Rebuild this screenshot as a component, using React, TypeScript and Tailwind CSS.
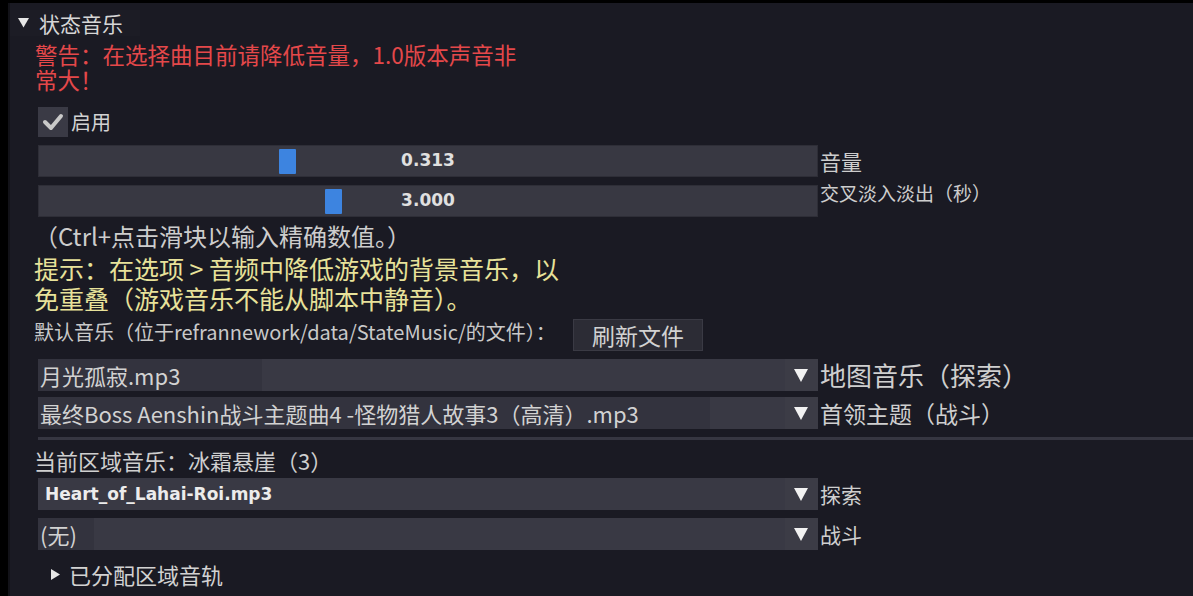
import React from "react";

const cjk = "font-['Noto_Sans_CJK_SC','Noto_Sans',sans-serif]";
const mono = "font-['DejaVu_Sans',sans-serif] font-bold";

function Triangle({ open }: { open: boolean }) {
  return open ? (
    <svg width="11" height="10" viewBox="0 0 11 10" className="shrink-0">
      <polygon points="0,0 11,0 5.5,9.5" fill="#e6e6e6" />
    </svg>
  ) : (
    <svg width="9" height="11" viewBox="0 0 9 11" className="shrink-0">
      <polygon points="0,0 9,5.5 0,11" fill="#e6e6e6" />
    </svg>
  );
}

function Slider({
  value,
  pos,
  label,
  labelCls,
}: {
  value: string;
  pos: number;
  label: string;
  labelCls: string;
}) {
  return (
    <div className="flex items-start gap-[2px] h-[32px]">
      <div className="relative h-[32px] w-[780px] bg-[#383842] border border-[#2e2e37] flex items-center justify-center">
        <div
          className="absolute top-[3px] h-[25px] w-[17px] bg-[#3d84e0] rounded-[1px]"
          style={{ left: pos }}
        />
        <span className={`${mono} text-[17px] text-[#e0e0e0] relative`}>{value}</span>
      </div>
      <span className={`${cjk} text-[#cdcdcd] ${labelCls}`}>{label}</span>
    </div>
  );
}

function Combo({
  text,
  label,
  hl,
  bold,
  labelSize = "text-[21px]",
}: {
  text: string;
  label: string;
  hl?: number;
  bold?: boolean;
  labelSize?: string;
}) {
  return (
    <div className="flex items-center gap-[2px] h-[32px]">
      <div className="h-[32px] w-[780px] bg-[#393944] flex items-center">
        <div
          className={`h-full flex items-center pl-[2px] shrink-0 ${hl ? "bg-[#33333e]" : ""}`}
          style={hl ? { width: hl } : undefined}
        >
          {bold ? (
            <span className={`${mono} text-[17px] leading-[32px] text-[#ececec] pl-[5px] whitespace-nowrap`}>
              {text}
            </span>
          ) : (
            <span className={`${cjk} text-[22px] leading-[32px] text-[#d2d2d2] whitespace-nowrap`}>{text}</span>
          )}
        </div>
        <div className="flex-1" />
        <div className="h-full w-[33px] bg-[#3c3c46] flex items-center pl-[9px]">
          <svg width="14" height="13" viewBox="0 0 14 13">
            <polygon points="0,0 14,0 7,13" fill="#f2f2f2" />
          </svg>
        </div>
      </div>
      <span className={`${cjk} ${labelSize} leading-[32px] text-[#cfcfcf] whitespace-nowrap`}>{label}</span>
    </div>
  );
}

export default function App() {
  return (
    <div className={`w-[1193px] h-[596px] bg-black overflow-hidden ${cjk}`}>
      <div className="h-[3px] bg-black" />
      <div className="flex h-[593px]">
        <div className="w-[8px] bg-black shrink-0" />
        <div className="w-[2px] bg-[#121218] shrink-0" />
        <div className="flex-1 bg-[#1a1a23] flex flex-col">
          {/* header */}
          <div className="flex items-center gap-[10px] pl-[8px] mt-[7px] h-[26px] w-[130px] bg-[#1c1c25]">
            <Triangle open />
            <span className="text-[21px] leading-[26px] text-[#d6d6d6]">状态音乐</span>
          </div>

          <div className="pl-[25px] flex flex-col">
            <p className="mt-[6px] w-[495px] text-[22.5px] leading-[25px] text-[#e4484a]">
              警告：在选择曲目前请降低音量，1.0版本声音非常大！
            </p>

            <div className="flex items-center gap-[3px] mt-[15px] pl-[3px] h-[30px]">
              <div className="w-[30px] h-[30px] bg-[#3a3a45] flex items-center justify-center">
                <svg width="22" height="18" viewBox="0 0 22 18">
                  <polyline
                    points="3,9 9,15 19,3"
                    fill="none"
                    stroke="#c9c9c9"
                    strokeWidth="4"
                    strokeLinecap="round"
                    strokeLinejoin="round"
                  />
                </svg>
              </div>
              <span className="text-[20px] leading-[30px] text-[#d2d2d2]">启用</span>
            </div>

            <div className="mt-[8px] pl-[3px] flex flex-col gap-[8px]">
              <Slider value="0.313" pos={240} label="音量" labelCls="text-[21px] leading-[32px]" />
              <Slider value="3.000" pos={286} label="交叉淡入淡出（秒）" labelCls="text-[19px] leading-[14px] pt-[1px]" />
            </div>

            <p className="mt-[2px] text-[24px] leading-[34px] text-[#cdcdcd] -ml-[1px]">
              （Ctrl+点击滑块以输入精确数值。）
            </p>

            <p className="mt-0 w-[545px] text-[25px] leading-[30px] text-[#e8e29a] -ml-[1px]">
              提示：在选项 &gt; 音频中降低游戏的背景音乐，以免重叠（游戏音乐不能从脚本中静音）。
            </p>

            <div className="flex items-start mt-[6px] h-[32px] -ml-[1px]">
              <span className="text-[20px] leading-[26px] text-[#c9c9c9] w-[539px] whitespace-nowrap">
                默认音乐（位于refrannework/data/StateMusic/的文件）：
              </span>
              <button className="h-[32px] w-[130px] bg-[#2c2c35] border border-[#3a3a44] text-[23px] leading-[30px] text-[#d2d2d2]">
                刷新文件
              </button>
            </div>

            <div className="mt-[8px] pl-[3px] flex flex-col gap-[6px]">
              <Combo text="月光孤寂.mp3" label="地图音乐（探索）" hl={224} labelSize="text-[26px]" />
              <Combo
                text="最终Boss Aenshin战斗主题曲4 -怪物猎人故事3（高清）.mp3"
                label="首领主题（战斗）"
                hl={672}
                labelSize="text-[23px]"
              />
            </div>
          </div>

          <div className="mt-[8px] ml-[28px] h-[3px] bg-[#363641] shrink-0" />

          <div className="pl-[24px] flex flex-col">
            <p className="mt-[6px] text-[22px] leading-[28px] text-[#cfcfcf]">当前区域音乐：冰霜悬崖（3）</p>
            <div className="mt-[4px] pl-[4px] flex flex-col gap-[8px]">
              <Combo text="Heart_of_Lahai-Roi.mp3" label="探索" bold />
              <Combo text="(无)" label="战斗" hl={56} />
            </div>
            <div className="flex items-center gap-[9px] mt-[8px] pl-[17px] h-[32px]">
              <Triangle open={false} />
              <span className="text-[22px] leading-[32px] text-[#d2d2d2]">已分配区域音轨</span>
            </div>
          </div>
        </div>
      </div>
    </div>
  );
}
